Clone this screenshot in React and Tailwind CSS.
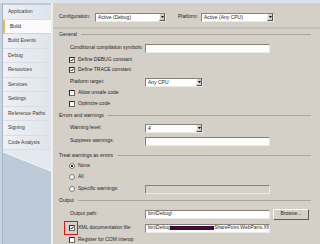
import React from "react";

const tabs = [
  "Application",
  "Build",
  "Build Events",
  "Debug",
  "Resources",
  "Services",
  "Settings",
  "Reference Paths",
  "Signing",
  "Code Analysis",
];

// classic sunken box, used by text boxes and combos
const Box = ({ w, disabled, children }) => (
  <div
    className={`${w} h-[9px] shrink-0 flex items-center overflow-hidden whitespace-nowrap border border-t-[#86837d] border-l-[#86837d] border-r-[#ebe9e5] border-b-[#ebe9e5] ${
      disabled ? "bg-[#d4d0c8]" : "bg-white"
    }`}
  >
    {children}
  </div>
);

const Combo = ({ w, value }) => (
  <Box w={w}>
    <span className="pl-[2px] leading-none">{value}</span>
    <div className="ml-auto h-full w-[6px] shrink-0 bg-[#d4d0c8] border-l border-[#f4f3f1] border-r border-r-[#555] border-b border-b-[#555] flex items-center justify-center">
      <svg width="3" height="2" viewBox="0 0 3 2">
        <path d="M0 0H3L1.5 2Z" fill="#000" />
      </svg>
    </div>
  </Box>
);

const Check = ({ on }) => (
  <svg width="6" height="6" viewBox="0 0 6 6" className="shrink-0">
    <rect x="0.5" y="0.5" width="5" height="5" fill="#fff" stroke="#6f6c67" />
    <path d="M0.5 5.5V0.5H5.5" fill="none" stroke="#2a2a2a" />
    {on && (
      <path d="M1.5 2.9L2.6 4L4.6 1.8" fill="none" stroke="#111" strokeWidth="1" />
    )}
  </svg>
);

const Radio = ({ on }) => (
  <svg width="6" height="6" viewBox="0 0 6 6" className="shrink-0">
    <circle cx="3" cy="3" r="2.5" fill="#fff" stroke="#7d7a74" />
    {on && <circle cx="3" cy="3" r="1.1" fill="#111" />}
  </svg>
);

const Section = ({ title }) => (
  <div className="h-[10px] flex items-center">
    <span className="leading-none">{title}</span>
    <div className="ml-[4px] flex-1 h-px bg-[#a9a59e]" />
  </div>
);

const Row = ({ children }) => (
  <div className="h-[10px] flex items-center">{children}</div>
);

export default function App() {
  return (
    <div className="w-[320px] h-[244px] overflow-hidden flex flex-col bg-[#d4d0c8] text-[5px] text-[#1f1f1f] font-['Liberation_Sans',Arial,sans-serif]">
      <div className="h-[3px] shrink-0 bg-[#dfe5ee]" />
      <div className="flex flex-1 min-h-0">
        {/* tab strip */}
        <div className="w-[51px] shrink-0 bg-[#bccad9] flex">
          <div className="w-[3px] bg-[#c9d4e0] border-r border-[#a9b6c5]" />
          <div className="flex-1 flex flex-col pt-[2px]">
            <div className="bg-gradient-to-r from-[#eef1f5] to-[#dfe4eb]">
              {tabs.map((t) => (
                <div
                  key={t}
                  className={`h-[14.5px] flex items-center pl-[5px] border-b ${
                    t === "Build"
                      ? "bg-[#fbfbfb] border-[#cfd6de] border-l-2 border-l-[#f0b94c] pl-[3px]"
                      : "border-[#d9dee5] text-[#3a3a3a]"
                  }`}
                >
                  {t}
                </div>
              ))}
            </div>
            <svg width="48" height="22" viewBox="0 0 48 22">
              <polygon points="0,0 48,0 48,21 0,2" fill="#e4e9ef" />
              <line x1="0" y1="2" x2="48" y2="21" stroke="#f4f6f9" strokeWidth="1" />
            </svg>
          </div>
        </div>
        <div className="w-[2px] shrink-0 bg-[#eeeeeb]" />

        {/* page */}
        <div className="flex-1 flex flex-col">
          <div className="h-[26px] shrink-0 pt-[4px] pl-[6px] border-b-2 border-[#c4c0b8]">
            <div className="h-[20px] flex items-center">
              <span className="w-[36px] shrink-0">Configuration:</span>
              <Combo w="w-[71px]" value="Active (Debug)" />
              <span className="ml-[12px] w-[23px] shrink-0">Platform:</span>
              <Combo w="w-[73px]" value="Active (Any CPU)" />
            </div>
          </div>

          <div className="flex flex-col pl-[6px] pr-[9px]">
            <div className="h-[14px]">
              <Section title="General" />
            </div>
            <div className="h-[12px]">
              <Row>
                <span className="pl-[11px] w-[86px] shrink-0">Conditional compilation symbols:</span>
                <Box w="w-[125px]" />
              </Row>
            </div>
            <div className="h-[10px]">
              <Row>
                <div className="pl-[10px]" />
                <Check on />
                <span className="ml-[3px]">Define DEBUG constant</span>
              </Row>
            </div>
            <div className="h-[12px]">
              <Row>
                <div className="pl-[10px]" />
                <Check on />
                <span className="ml-[3px]">Define TRACE constant</span>
              </Row>
            </div>
            <div className="h-[11px]">
              <Row>
                <span className="pl-[11px] w-[86px] shrink-0">Platform target:</span>
                <Combo w="w-[58px]" value="Any CPU" />
              </Row>
            </div>
            <div className="h-[11px]">
              <Row>
                <div className="pl-[10px]" />
                <Check />
                <span className="ml-[3px]">Allow unsafe code</span>
              </Row>
            </div>
            <div className="h-[11px]">
              <Row>
                <div className="pl-[10px]" />
                <Check />
                <span className="ml-[3px]">Optimize code</span>
              </Row>
            </div>
            <div className="h-[13px]">
              <Section title="Errors and warnings" />
            </div>
            <div className="h-[13px]">
              <Row>
                <span className="pl-[11px] w-[86px] shrink-0">Warning level:</span>
                <Combo w="w-[58px]" value="4" />
              </Row>
            </div>
            <div className="h-[14px]">
              <Row>
                <span className="pl-[11px] w-[86px] shrink-0">Suppress warnings:</span>
                <Box w="w-[125px]" />
              </Row>
            </div>
            <div className="h-[11px]">
              <Section title="Treat warnings as errors" />
            </div>
            <div className="h-[11px]">
              <Row>
                <div className="pl-[10px]" />
                <Radio on />
                <span className="ml-[3px]">None</span>
              </Row>
            </div>
            <div className="h-[12px]">
              <Row>
                <div className="pl-[10px]" />
                <Radio />
                <span className="ml-[3px]">All</span>
              </Row>
            </div>
            <div className="h-[11px]">
              <Row>
                <div className="pl-[10px]" />
                <Radio />
                <span className="ml-[3px] w-[67px] shrink-0">Specific warnings:</span>
                <Box w="w-[125px]" disabled />
              </Row>
            </div>
            <div className="h-[14px]">
              <Section title="Output" />
            </div>
            <div className="h-[14px]">
              <Row>
                <span className="pl-[11px] w-[86px] shrink-0">Output path:</span>
                <Box w="w-[125px]">
                  <span className="pl-[2px]">bin\Debug\</span>
                </Box>
                <div className="ml-[3px] w-[36px] h-[11px] shrink-0 flex items-center justify-center border border-t-[#fbfbfa] border-l-[#fbfbfa] border-r-[#5e5b57] border-b-[#5e5b57] bg-[#d4d0c8]">
                  Browse...
                </div>
              </Row>
            </div>
            <div className="h-[12px]">
              <Row>
                <div className="pl-[10px]" />
                <div className="relative flex">
                  <Check on />
                  <div className="absolute -left-[5px] -top-[4px] w-[14px] h-[14px] border border-[#e01414]" />
                </div>
                <span className="ml-[3px] w-[67px] shrink-0">XML documentation file:</span>
                <Box w="w-[125px]">
                  <span className="pl-[2px]">bin\Debug\</span>
                  <span className="-ml-[2px] w-[44px] h-[4px] shrink-0 bg-[#3f0a40]" />
                  <span>SharePoint.WebParts.XM</span>
                </Box>
              </Row>
            </div>
            <div className="h-[10px]">
              <Row>
                <div className="pl-[10px]" />
                <Check />
                <span className="ml-[3px]">Register for COM interop</span>
              </Row>
            </div>
          </div>
        </div>
      </div>
    </div>
  );
}
